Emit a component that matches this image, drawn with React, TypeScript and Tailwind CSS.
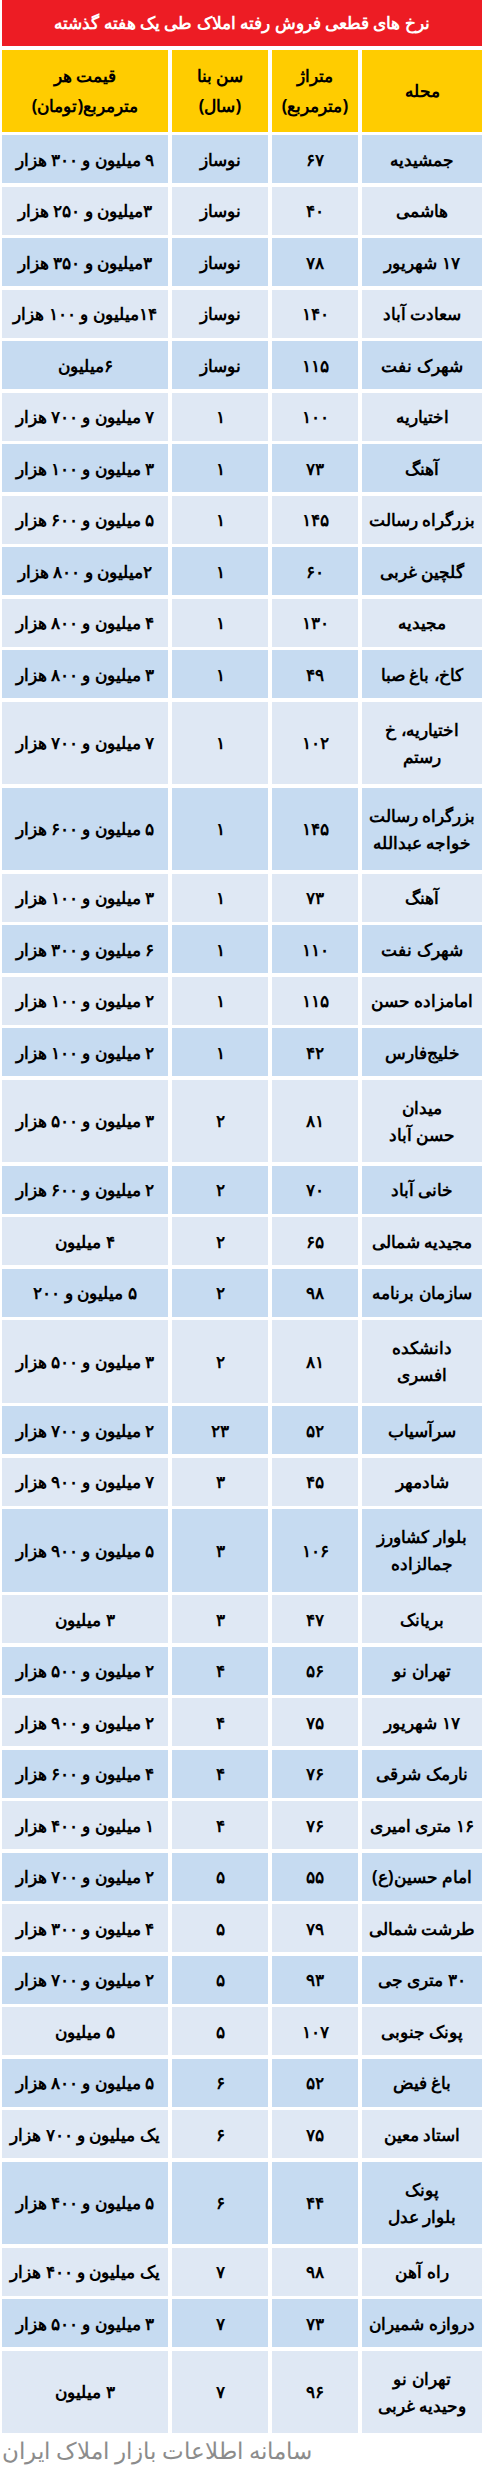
import React from "react";

type Row = {
  name: string[];
  area: string;
  age: string;
  price: string;
};

const rows: Row[] = [
  { name: ["جمشیدیه"], area: "۶۷", age: "نوساز", price: "۹ میلیون و ۳۰۰ هزار" },
  { name: ["هاشمی"], area: "۴۰", age: "نوساز", price: "۳میلیون و ۲۵۰ هزار" },
  { name: ["۱۷ شهریور"], area: "۷۸", age: "نوساز", price: "۳میلیون و ۳۵۰ هزار" },
  { name: ["سعادت آباد"], area: "۱۴۰", age: "نوساز", price: "۱۴میلیون و ۱۰۰ هزار" },
  { name: ["شهرک نفت"], area: "۱۱۵", age: "نوساز", price: "۶میلیون" },
  { name: ["اختیاریه"], area: "۱۰۰", age: "۱", price: "۷ میلیون و ۷۰۰ هزار" },
  { name: ["آهنگ"], area: "۷۳", age: "۱", price: "۳ میلیون و ۱۰۰ هزار" },
  { name: ["بزرگراه رسالت"], area: "۱۴۵", age: "۱", price: "۵ میلیون و ۶۰۰ هزار" },
  { name: ["گلچین غربی"], area: "۶۰", age: "۱", price: "۲میلیون و ۸۰۰ هزار" },
  { name: ["مجیدیه"], area: "۱۳۰", age: "۱", price: "۴ میلیون و ۸۰۰ هزار" },
  { name: ["کاخ، باغ صبا"], area: "۴۹", age: "۱", price: "۳ میلیون و ۸۰۰ هزار" },
  { name: ["اختیاریه، خ", "رستم"], area: "۱۰۲", age: "۱", price: "۷ میلیون و ۷۰۰ هزار" },
  { name: ["بزرگراه رسالت", "خواجه عبدالله"], area: "۱۴۵", age: "۱", price: "۵ میلیون و ۶۰۰ هزار" },
  { name: ["آهنگ"], area: "۷۳", age: "۱", price: "۳ میلیون و ۱۰۰ هزار" },
  { name: ["شهرک نفت"], area: "۱۱۰", age: "۱", price: "۶ میلیون و ۳۰۰ هزار" },
  { name: ["امامزاده حسن"], area: "۱۱۵", age: "۱", price: "۲ میلیون و ۱۰۰ هزار" },
  { name: ["خلیج‌فارس"], area: "۴۲", age: "۱", price: "۲ میلیون و ۱۰۰ هزار" },
  { name: ["میدان", "حسن آباد"], area: "۸۱", age: "۲", price: "۳ میلیون و ۵۰۰ هزار" },
  { name: ["خانی آباد"], area: "۷۰", age: "۲", price: "۲ میلیون و ۶۰۰ هزار" },
  { name: ["مجیدیه شمالی"], area: "۶۵", age: "۲", price: "۴ میلیون" },
  { name: ["سازمان برنامه"], area: "۹۸", age: "۲", price: "۵ میلیون و ۲۰۰" },
  { name: ["دانشکده", "افسری"], area: "۸۱", age: "۲", price: "۳ میلیون و ۵۰۰ هزار" },
  { name: ["سرآسیاب"], area: "۵۲", age: "۲۳", price: "۲ میلیون و ۷۰۰ هزار" },
  { name: ["شادمهر"], area: "۴۵", age: "۳", price: "۷ میلیون و ۹۰۰ هزار" },
  { name: ["بلوار کشاورز", "جمالزاده"], area: "۱۰۶", age: "۳", price: "۵ میلیون و ۹۰۰ هزار" },
  { name: ["بریانک"], area: "۴۷", age: "۳", price: "۳ میلیون" },
  { name: ["تهران نو"], area: "۵۶", age: "۴", price: "۲ میلیون و ۵۰۰ هزار" },
  { name: ["۱۷ شهریور"], area: "۷۵", age: "۴", price: "۲ میلیون و ۹۰۰ هزار" },
  { name: ["نارمک شرقی"], area: "۷۶", age: "۴", price: "۴ میلیون و ۶۰۰ هزار" },
  { name: ["۱۶ متری امیری"], area: "۷۶", age: "۴", price: "۱ میلیون و ۴۰۰ هزار" },
  { name: ["امام حسین(ع)"], area: "۵۵", age: "۵", price: "۲ میلیون و ۷۰۰ هزار" },
  { name: ["طرشت شمالی"], area: "۷۹", age: "۵", price: "۴ میلیون و ۳۰۰ هزار" },
  { name: ["۳۰ متری جی"], area: "۹۳", age: "۵", price: "۲ میلیون و ۷۰۰ هزار" },
  { name: ["پونک جنوبی"], area: "۱۰۷", age: "۵", price: "۵ میلیون" },
  { name: ["باغ فیض"], area: "۵۲", age: "۶", price: "۵ میلیون و ۸۰۰ هزار" },
  { name: ["استاد معین"], area: "۷۵", age: "۶", price: "یک میلیون و ۷۰۰ هزار" },
  { name: ["پونک", "بلوار عدل"], area: "۴۴", age: "۶", price: "۵ میلیون و ۴۰۰ هزار" },
  { name: ["راه آهن"], area: "۹۸", age: "۷", price: "یک میلیون و ۴۰۰ هزار" },
  { name: ["دروازه شمیران"], area: "۷۳", age: "۷", price: "۳ میلیون و ۵۰۰ هزار" },
  { name: ["تهران نو", "وحیدیه غربی"], area: "۹۶", age: "۷", price: "۳ میلیون" },
];

function Cell({ children, tone, tall }: { children: React.ReactNode; tone: string; tall: boolean }) {
  return (
    <div
      className={`flex flex-col items-center justify-center whitespace-nowrap text-center leading-[27px] ${tone} ${
        tall ? "h-[82.5px]" : "h-[48px]"
      }`}
    >
      {children}
    </div>
  );
}

export default function App() {
  return (
    <div
      dir="rtl"
      className="w-[482px] overflow-hidden bg-white pl-[2px] text-black"
      style={{ fontFamily: '"Noto Sans", sans-serif' }}
    >
      <div className="flex h-[46px] items-center justify-center bg-[#ed1c24] text-[17px] font-bold text-white">
        نرخ های قطعی فروش رفته املاک طی یک هفته گذشته
      </div>

      <div className="mt-[3.5px] grid grid-cols-[120px_86px_96px_166px] gap-x-[4px] gap-y-[3.5px] text-[17px] font-bold">
        <div className="flex h-[82px] items-center justify-center bg-[#ffcc00]">محله</div>
        <div className="flex h-[82px] flex-col items-center justify-center bg-[#ffcc00] leading-[30px]">
          <span>متراژ</span>
          <span>(مترمربع)</span>
        </div>
        <div className="flex h-[82px] flex-col items-center justify-center bg-[#ffcc00] leading-[30px]">
          <span>سن بنا</span>
          <span>(سال)</span>
        </div>
        <div className="flex h-[82px] flex-col items-center justify-center bg-[#ffcc00] leading-[30px]">
          <span>قیمت هر</span>
          <span>مترمربع(تومان)</span>
        </div>

        {rows.map((row, i) => {
          const tone = i % 2 === 0 ? "bg-[#c6dbf1]" : "bg-[#dfe8f4]";
          const tall = row.name.length > 1;
          return (
            <React.Fragment key={i}>
              <Cell tone={tone} tall={tall}>
                {row.name.map((line) => (
                  <span key={line}>{line}</span>
                ))}
              </Cell>
              <Cell tone={tone} tall={tall}>
                {row.area}
              </Cell>
              <Cell tone={tone} tall={tall}>
                {row.age}
              </Cell>
              <Cell tone={tone} tall={tall}>
                {row.price}
              </Cell>
            </React.Fragment>
          );
        })}
      </div>

      <div className="flex justify-end text-[23px] leading-[34px] text-[#8c8c8c]">
        سامانه اطلاعات بازار املاک ایران
      </div>
    </div>
  );
}
